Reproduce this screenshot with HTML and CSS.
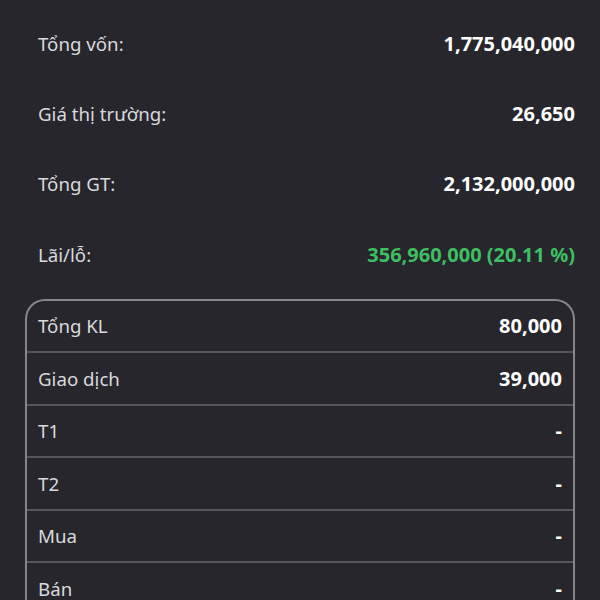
FILE: index.html
```html
<!DOCTYPE html>
<html lang="vi">
<head>
<meta charset="utf-8">
<title>Tài sản</title>
<link rel="stylesheet" href="styles.css">
</head>
<body>
<main class="screen">
  <section class="summary">
    <div class="summary-row"><span class="label">Tổng vốn:</span><span class="value">1,775,040,000</span></div>
    <div class="summary-row"><span class="label">Giá thị trường:</span><span class="value">26,650</span></div>
    <div class="summary-row"><span class="label">Tổng GT:</span><span class="value">2,132,000,000</span></div>
    <div class="summary-row"><span class="label">Lãi/lỗ:</span><span class="value gain">356,960,000 (20.11 %)</span></div>
  </section>
  <section class="detail">
    <div class="detail-row"><span class="label">Tổng KL</span><span class="value">80,000</span></div>
    <div class="detail-row"><span class="label">Giao dịch</span><span class="value">39,000</span></div>
    <div class="detail-row"><span class="label">T1</span><span class="value">-</span></div>
    <div class="detail-row"><span class="label">T2</span><span class="value">-</span></div>
    <div class="detail-row"><span class="label">Mua</span><span class="value">-</span></div>
    <div class="detail-row"><span class="label">Bán</span><span class="value">-</span></div>
  </section>
</main>
</body>
</html>
```
FILE: styles.css
```css
html, body {
  margin: 0;
  padding: 0;
  background: #27262c;
  height: 100%;
  overflow: hidden;
}

.screen {
  font-family: "Noto Sans", "Open Sans", sans-serif;
  font-size: 18.7px;
  color: #dcdce0;
  padding: 8px 25px 0 25px;
}

.summary {
  padding: 0 0 0 13px;
}

.summary-row {
  height: 70.4px;
  display: flex;
  align-items: center;
  justify-content: space-between;
}

.label {
  color: #d9d9de;
}

.value {
  font-size: 20px;
  font-weight: 700;
  color: #ffffff;
}

.value.gain {
  color: #3dbf62;
}

.detail {
  margin-top: 9px;
  border: 2px solid #85858a;
  border-bottom: none;
  border-radius: 20px 20px 0 0;
}

.detail-row {
  height: 50.5px;
  display: flex;
  align-items: center;
  justify-content: space-between;
  padding: 0 11px 0 11px;
  border-bottom: 2px solid #55555a;
}
```
